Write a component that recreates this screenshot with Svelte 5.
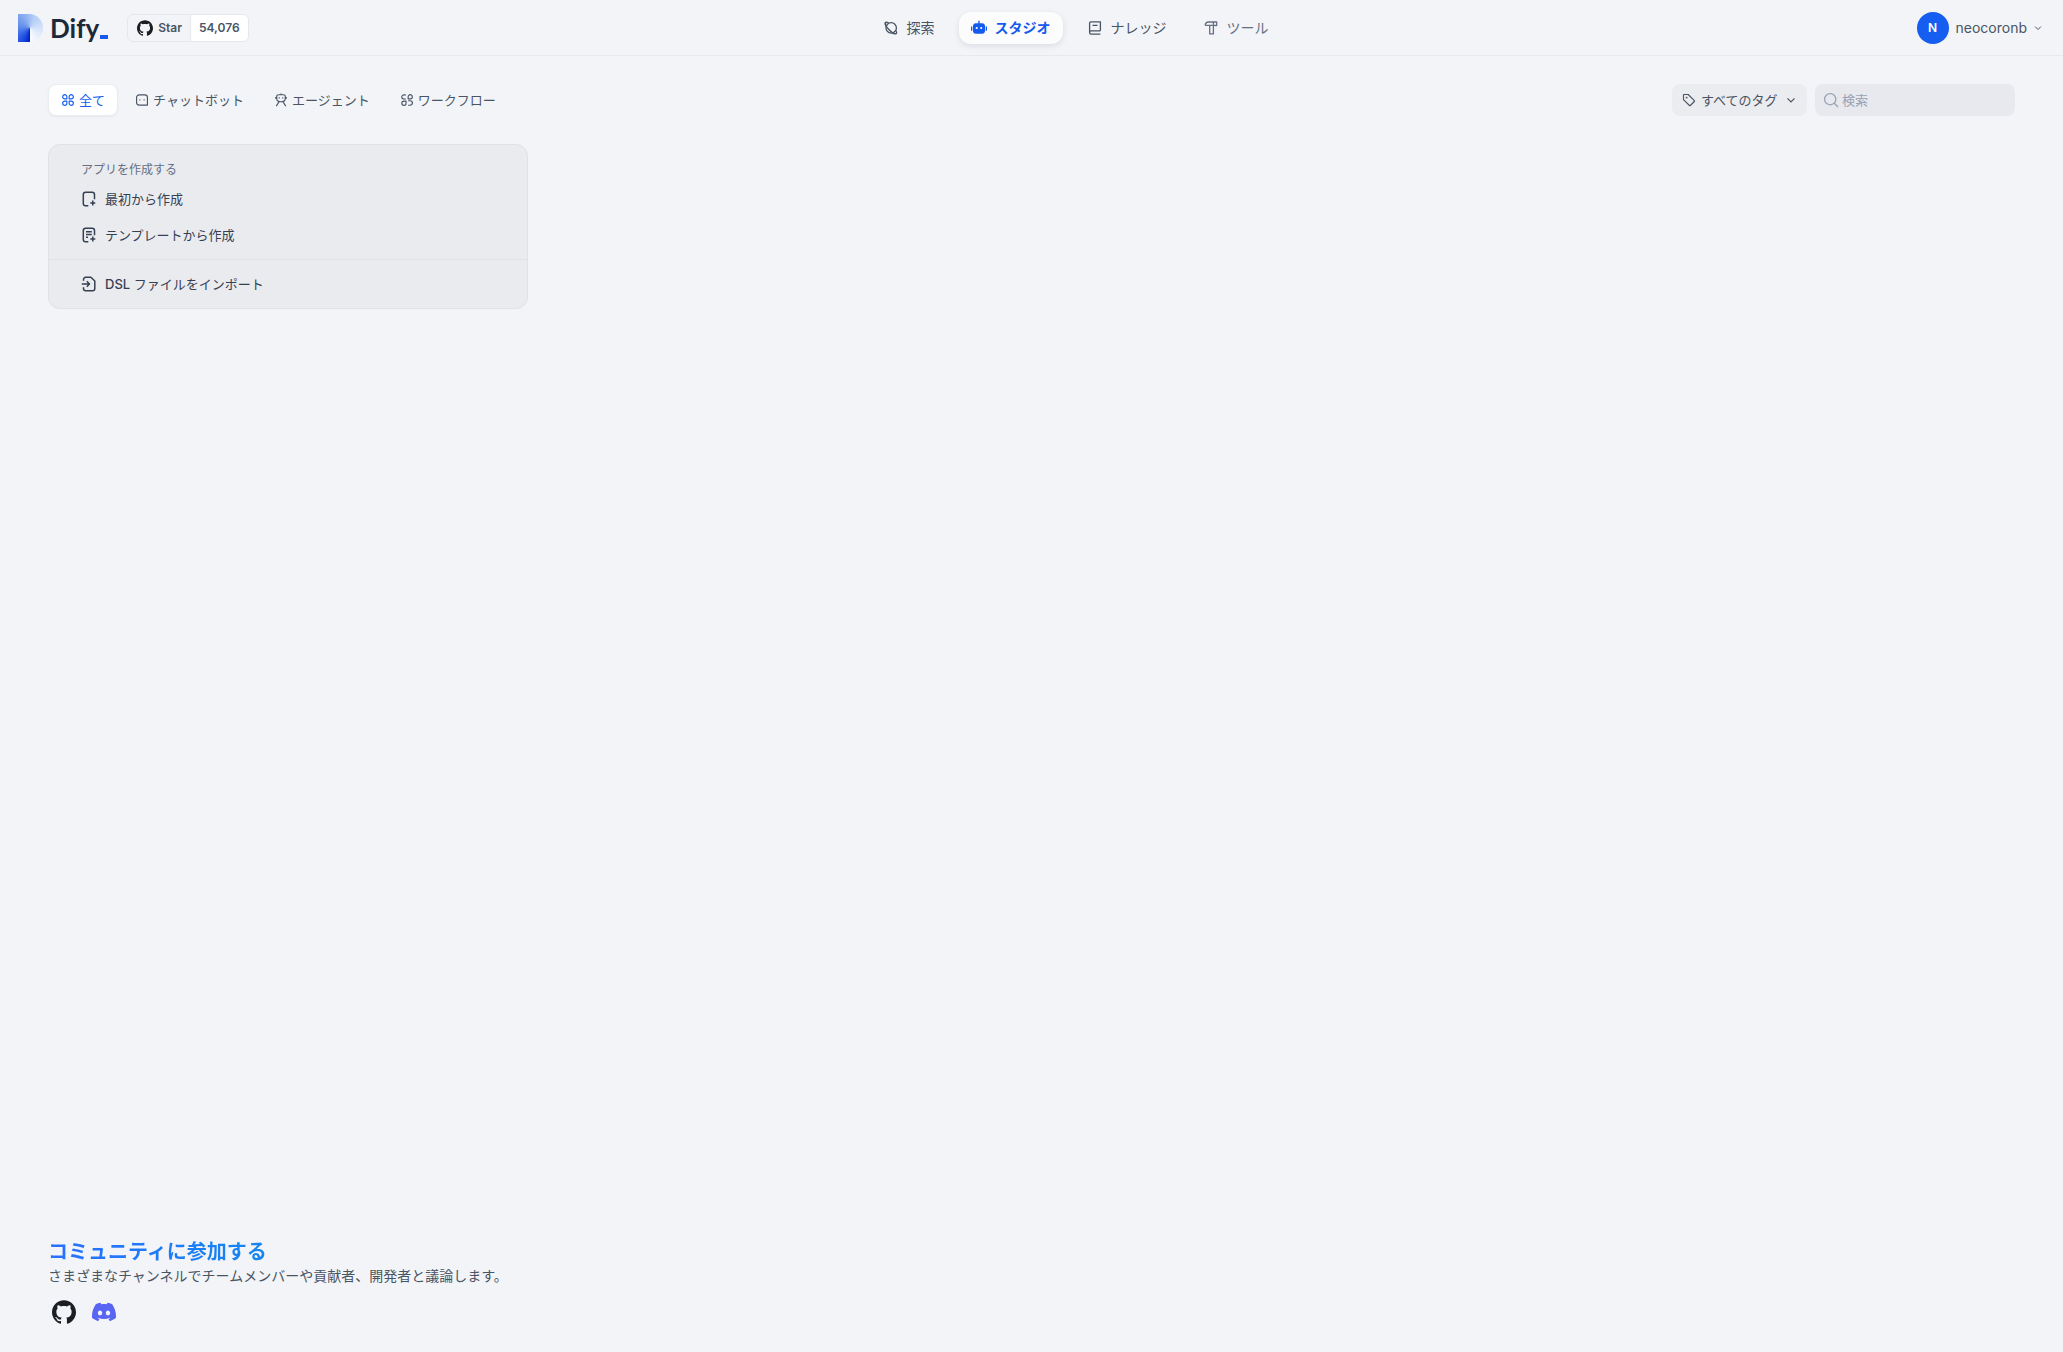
<script lang="ts">
	type Item = { id: string; label: string };

	const navItems: Item[] = [
		{ id: 'explore', label: '探索' },
		{ id: 'studio', label: 'スタジオ' },
		{ id: 'knowledge', label: 'ナレッジ' },
		{ id: 'tools', label: 'ツール' },
	];
	const tabs: Item[] = [
		{ id: 'all', label: '全て' },
		{ id: 'chat', label: 'チャットボット' },
		{ id: 'agent', label: 'エージェント' },
		{ id: 'workflow', label: 'ワークフロー' },
	];

	let activeNav = $state('studio');
	let activeTab = $state('all');
	let tag = $state('all');
	let keyword = $state('');
</script>

{#snippet github()}
	<svg viewBox="0 0 24 24" fill="currentColor" aria-hidden="true">
		<path d="M12 .297c-6.63 0-12 5.373-12 12 0 5.303 3.438 9.8 8.205 11.385.6.113.82-.258.82-.577 0-.285-.01-1.04-.015-2.04-3.338.724-4.042-1.61-4.042-1.61C4.422 18.07 3.633 17.7 3.633 17.7c-1.087-.744.084-.729.084-.729 1.205.084 1.838 1.236 1.838 1.236 1.07 1.835 2.809 1.305 3.495.998.108-.776.417-1.305.76-1.605-2.665-.3-5.466-1.332-5.466-5.93 0-1.31.465-2.38 1.235-3.22-.135-.303-.54-1.523.105-3.176 0 0 1.005-.322 3.3 1.23.96-.267 1.98-.399 3-.405 1.02.006 2.04.138 3 .405 2.28-1.552 3.285-1.23 3.285-1.23.645 1.653.24 2.873.12 3.176.765.84 1.23 1.91 1.23 3.22 0 4.61-2.805 5.625-5.475 5.92.42.36.81 1.096.81 2.22 0 1.606-.015 2.896-.015 3.286 0 .315.21.69.825.57C20.565 22.092 24 17.592 24 12.297c0-6.627-5.373-12-12-12" />
	</svg>
{/snippet}

{#snippet chevron()}
	<svg class="chevron" viewBox="0 0 12 12" fill="none" stroke="currentColor" aria-hidden="true">
		<path d="M2.5 4.3 6 7.8l3.5-3.5" stroke-width="1.2" />
	</svg>
{/snippet}

{#snippet icon(id: string)}
	<svg viewBox="0 0 16 16" fill="none" stroke="currentColor" stroke-width="1.3" stroke-linejoin="round" aria-hidden="true">
		{#if id === 'explore'}
			<circle cx="8.200" cy="7.900" r="5.200" />
			<path d="M5.600 2.900C4 2 2.800 1.900 2.400 2.400c-.9 1 .7 4.200 3.500 7.100s6 4.900 7.300 4.200c.7-.4.500-1.700-.5-3.500M2.600 2.300v4.200M9.500 13.600h4" />
		{:else if id === 'studio'}
			<path d="M7.300.8h1.400v2.400h2.600c1.500 0 2.700 1.200 2.700 2.700v5.100c0 1.500-1.200 2.700-2.700 2.700H4.700C3.200 13.700 2 12.500 2 11V5.900c0-1.500 1.200-2.700 2.700-2.700h2.600zM0 6.500h1.300v4.200H0zM14.700 6.500H16v4.200h-1.300z" fill="currentColor" stroke="none" />
			<circle class="eye" cx="5.8" cy="8" r="1.1" />
			<circle class="eye" cx="10.2" cy="8" r="1.1" />
		{:else if id === 'knowledge'}
			<path d="M13.400 10.800V1.900H4c-.8 0-1.400.6-1.400 1.400v9.200c0 .9.600 1.600 1.500 1.600h9.300M2.600 12.400c0-.9.600-1.600 1.500-1.600h9.300M5.500 5.300h5" />
		{:else if id === 'tools'}
			<path d="M2.100 5.400c.3-2.100 1.400-3.400 3.400-3.400h8.200v3.500h-1.800L10.400 5v8.900H6.700V5.400H2.100M10.400 2v3.400M6.700 5.400h3.700" />
		{:else if id === 'all'}
			<path d="M6.700 6.700H4.300A2.400 2.400 0 1 1 6.700 4.300zM9.300 6.700h2.400A2.400 2.400 0 1 0 9.300 4.300zM6.700 9.300H4.300a2.400 2.400 0 1 0 2.400 2.400zM9.300 9.300h2.400a2.400 2.400 0 1 1-2.400 2.400z" />
		{:else if id === 'chat'}
			<path d="M4.800 2.200h6.400c1.700 0 3 1.200 3 2.900v8.700H4.800c-1.700 0-3-1.200-3-2.900V5.100c0-1.700 1.300-2.900 3-2.900z" />
			<path d="M5.600 7v1.700M10.400 7v1.700" stroke-width="1" />
		{:else if id === 'agent'}
			<path d="M5.400 2h5.200c1.300 0 2.300.9 2.300 2.200v2.300c0 2.200-1.600 3.500-4.900 3.500S3.100 8.700 3.100 6.500V4.200C3.100 2.900 4.100 2 5.400 2zM8 .5V2M2 4.500v2M14 4.500v2M5.900 9.700 2.600 15M10.100 9.700l3.300 5.300M6 4.800v1.600M10 4.800v1.600" />
		{:else if id === 'workflow'}
			<path d="M6.900 9.300H4.500a2.400 2.400 0 1 0 2.400 2.400zM9.300 6.700h2.400A2.400 2.400 0 1 0 9.300 4.300z" />
			<path d="M6.700 2.100H4.900C3.200 2.100 2 3 2 4.600s1.200 2.300 2.600 2.300h2.100M9.300 14h1.900c1.800 0 3-1.100 3-2.800s-1.300-2.400-2.600-2.400H9.300" />
		{:else if id === 'tag'}
			<path d="M1.700 6.500V2.400c0-.4.3-.7.7-.7h4.700l7 7c.3.300.3.700 0 1l-4.600 4.600c-.3.300-.7.300-1 0L1.700 7.500z" />
			<path d="M5.300 4.300v2M4.300 5.300h2" stroke-width="1" />
		{:else if id === 'search'}
			<circle cx="7.200" cy="7.200" r="5.600" />
			<path d="m11.300 11.300 3.700 3.700" />
		{:else if id === 'blank'}
			<path d="M7.300 14.700H4.600c-1.300 0-2.300-.9-2.300-2.300V3.600c0-1.400 1-2.300 2.300-2.300h6.600c1.300 0 2.300.9 2.300 2.300v4.700M11.800 9.600v5M9.300 12.100h5" stroke-width="1.500" />
		{:else if id === 'template'}
			<path d="M7.300 14.700H4.600c-1.300 0-2.300-.9-2.300-2.300V3.600c0-1.400 1-2.300 2.300-2.300h6.600c1.300 0 2.300.9 2.300 2.300v4.700M11.800 9.600v5M9.300 12.100h5M5 4.800h5.800M5 7.600h5.800M5 10.300h2" stroke-width="1.500" />
		{:else if id === 'import'}
			<path d="M2.500 4.700V3.600c0-1.300.9-2.300 2.200-2.300h5.200L13.800 5v7.400c0 1.400-.9 2.300-2.300 2.300H4.700c-1.300 0-2.200-.9-2.200-2.300v-1.100M.8 8h7.400M5.800 5.300 8.500 8l-2.700 2.700" stroke-width="1.500" />
		{/if}
	</svg>
{/snippet}

<div class="page">
	<header>
		<div class="brand">
			<a class="logo" href="#home" aria-label="Dify">
				<span class="mark"></span>
				<span class="name">Dify</span>
				<span class="cursor"></span>
			</a>
			<a class="star" href="#github">
				<span class="star-label">{@render github()}Star</span>
				<span class="star-count">54,076</span>
			</a>
		</div>
		<nav>
			{#each navItems as item (item.id)}
				<a
					href="#{item.id}"
					class={item.id}
					class:active={activeNav === item.id}
					onclick={() => (activeNav = item.id)}
				>
					{@render icon(item.id)}<span class="label">{item.label}</span>
				</a>
			{/each}
		</nav>
		<button class="account" type="button">
			<span class="avatar">N</span>
			<span>neocoronb</span>
			{@render chevron()}
		</button>
	</header>

	<main>
		<div class="toolbar">
			<div class="tabs">
				{#each tabs as tab (tab.id)}
					<button type="button" class:active={activeTab === tab.id} onclick={() => (activeTab = tab.id)}>
						{@render icon(tab.id)}<span class="label">{tab.label}</span>
					</button>
				{/each}
			</div>
			<div class="filters">
				<label class="tag">
					{@render icon('tag')}
					<select bind:value={tag} aria-label="タグ">
						<option value="all">すべてのタグ</option>
					</select>
					{@render chevron()}
				</label>
				<label class="search">
					{@render icon('search')}
					<input type="text" placeholder="検索" aria-label="検索" bind:value={keyword} />
				</label>
			</div>
		</div>

		<div class="grid">
			<section class="card">
				<div class="group">
					<h2>アプリを作成する</h2>
					<button type="button">{@render icon('blank')}<span class="label">最初から作成</span></button>
					<button type="button">{@render icon('template')}<span class="label">テンプレートから作成</span></button>
				</div>
				<div class="group import">
					<button type="button">
						{@render icon('import')}<span class="label"><b>DSL</b> ファイルをインポート</span>
					</button>
				</div>
			</section>
		</div>
	</main>

	<footer>
		<h3>コミュニティに参加する</h3>
		<p>さまざまなチャンネルでチームメンバーや貢献者、開発者と議論します。</p>
		<div class="social">
			<a href="#github" aria-label="GitHub">{@render github()}</a>
			<a class="discord" href="#discord" aria-label="Discord">
				<svg viewBox="0 0 24 24" fill="currentColor" aria-hidden="true">
					<path d="M20.317 4.3698a19.7913 19.7913 0 00-4.8851-1.5152.0741.0741 0 00-.0785.0371c-.211.3753-.4447.8648-.6083 1.2495-1.8447-.2762-3.68-.2762-5.4868 0-.1636-.3933-.4058-.8742-.6177-1.2495a.077.077 0 00-.0785-.037 19.7363 19.7363 0 00-4.8852 1.515.0699.0699 0 00-.0321.0277C.5334 9.0458-.319 13.5799.0992 18.0578a.0824.0824 0 00.0312.0561c2.0528 1.5076 4.0413 2.4228 5.9929 3.0294a.0777.0777 0 00.0842-.0276c.4616-.6304.8731-1.2952 1.226-1.9942a.076.076 0 00-.0416-.1057c-.6528-.2476-1.2743-.5495-1.8722-.8923a.077.077 0 01-.0076-.1277c.1258-.0943.2517-.1923.3718-.2914a.0743.0743 0 01.0776-.0105c3.9278 1.7933 8.18 1.7933 12.0614 0a.0739.0739 0 01.0785.0095c.1202.099.246.1981.3728.2924a.077.077 0 01-.0066.1276 12.2986 12.2986 0 01-1.873.8914.0766.0766 0 00-.0407.1067c.3604.698.7719 1.3628 1.225 1.9932a.076.076 0 00.0842.0286c1.961-.6067 3.9495-1.5219 6.0023-3.0294a.077.077 0 00.0313-.0552c.5004-5.177-.8382-9.6739-3.5485-13.6604a.061.061 0 00-.0312-.0286zM8.02 15.3312c-1.1825 0-2.1569-1.0857-2.1569-2.419 0-1.3332.9555-2.4189 2.157-2.4189 1.2108 0 2.1757 1.0952 2.1568 2.419 0 1.3332-.9555 2.4189-2.1569 2.4189zm7.9748 0c-1.1825 0-2.1569-1.0857-2.1569-2.419 0-1.3332.9554-2.4189 2.1569-2.4189 1.2108 0 2.1757 1.0952 2.1568 2.419 0 1.3332-.946 2.4189-2.1568 2.4189Z" />
				</svg>
			</a>
		</div>
	</footer>
</div>

<style>
	:global(body) {
		background: #f2f4f8;
	}
	.page {
		display: flex;
		flex-direction: column;
		min-height: 100vh;
		font-family: Inter, 'Noto Sans CJK JP', sans-serif;
		font-size: 13px;
		color: #495464;
		background: #f2f4f8;
	}
	.page * {
		box-sizing: border-box;
	}
	a {
		color: inherit;
		text-decoration: none;
	}
	button,
	select,
	input {
		font: inherit;
		color: inherit;
		background: none;
		border: none;
		outline: none;
		padding: 0;
	}
	button,
	select {
		cursor: pointer;
	}
	svg {
		width: 16px;
		height: 16px;
		flex-shrink: 0;
	}
	.chevron {
		width: 12px;
		height: 12px;
	}
	/* the CJK face sits low in its line box */
	.label {
		padding-bottom: 2px;
	}

	header {
		display: flex;
		align-items: center;
		justify-content: space-between;
		height: 56px;
		padding: 0 20px 0 18px;
		border-bottom: 1px solid #e7e9ee;
	}
	.brand {
		display: flex;
		align-items: center;
		gap: 19px;
	}
	.logo {
		display: flex;
		align-items: center;
		height: 28px;
	}
	.mark {
		width: 25px;
		height: 28px;
		margin-right: 7px;
		border-radius: 0 14px 14px 0;
		background: conic-gradient(from 180deg at 12px 14px, #0219c4, #1d4be0 30deg, #5a87ea 90deg, #86abf1 150deg, #b3cdf7 200deg, #d3e2fa 270deg, #f6f9fe 350deg, #f6f9fe);
	}
	.name {
		font-family: Lato, sans-serif;
		font-size: 26px;
		font-weight: 700;
		line-height: 28px;
		color: #1d2939;
	}
	.cursor {
		width: 8px;
		height: 4px;
		margin: 18px 0 0 1px;
		background: #155aef;
	}
	.star {
		display: flex;
		height: 28px;
		overflow: hidden;
		border: 1px solid #e6e8ed;
		border-radius: 6px;
		font-size: 12px;
		font-weight: 600;
	}
	.star-label,
	.star-count {
		display: flex;
		align-items: center;
		padding: 0 8px;
	}
	.star-label {
		gap: 5px;
		padding-left: 9px;
	}
	.star-label svg {
		color: #1b1f24;
	}
	.star-count {
		background: #fff;
		border-left: 1px solid #e6e8ed;
	}

	nav {
		display: flex;
		gap: 12px;
		font-size: 14px;
	}
	nav a {
		display: flex;
		align-items: center;
		gap: 8px;
		height: 32px;
		padding: 0 12px;
		border-radius: 12px;
	}
	nav .tools {
		color: #676f83;
	}
	nav .active {
		font-weight: 700;
		color: #155aef;
		background: #fcfcfd;
		box-shadow: 0 2px 6px #1018281a;
	}
	.eye {
		fill: #fcfcfd;
		stroke: none;
	}
	.account {
		display: flex;
		align-items: center;
		gap: 7px;
		padding-left: 14px;
		font-size: 14px;
	}
	.account .chevron {
		width: 10px;
		height: 10px;
		margin-left: -1px;
	}
	.avatar {
		display: grid;
		place-items: center;
		width: 32px;
		height: 32px;
		border-radius: 50%;
		font-size: 12px;
		font-weight: 600;
		color: #fff;
		background: #155eef;
	}

	main {
		flex: 1;
		padding: 28px 48px;
	}
	.toolbar {
		display: flex;
		align-items: center;
		justify-content: space-between;
		height: 32px;
	}
	.tabs,
	.filters {
		display: flex;
		gap: 4px;
	}
	.tabs button {
		display: flex;
		align-items: center;
		gap: 4px;
		height: 32px;
		padding: 0 12px;
		border: 1px solid transparent;
		border-radius: 8px;
	}
	.tabs button svg {
		width: 14px;
		height: 14px;
	}
	.tabs .active {
		color: #155eef;
		background: #fff;
		border-color: #eaecf0;
		box-shadow: 0 1px 2px #1018280d;
	}
	.filters {
		gap: 8px;
	}
	.tag,
	.search {
		display: flex;
		align-items: center;
		height: 32px;
		border-radius: 8px;
	}
	.tag {
		gap: 5px;
		padding: 0 10px;
		background: #ebecef;
	}
	.tag svg:first-child {
		width: 14px;
		height: 14px;
	}
	.tag select {
		appearance: none;
	}
	.search {
		gap: 3px;
		width: 200px;
		padding: 0 8px;
		color: #98a2b3;
		background: #e8e9ee;
	}
	.search input {
		flex: 1;
		min-width: 0;
	}
	.search input::placeholder {
		color: #98a2b3;
	}

	.grid {
		display: grid;
		grid-template-columns: repeat(4, 1fr);
		gap: 16px;
		padding-top: 28px;
	}
	.card {
		border: 1px solid #dfe1e5;
		border-radius: 12px;
		background: #eaebef;
	}
	.group {
		display: flex;
		flex-direction: column;
		gap: 4px;
		padding: 16px 8px 8px;
	}
	.group.import {
		padding: 8px;
		border-top: 1px solid #dfe1e5;
	}
	.card h2 {
		margin: 0;
		padding: 0 24px;
		font-size: 12px;
		font-weight: 400;
		line-height: 18px;
		color: #676f83;
	}
	.card button {
		display: flex;
		align-items: center;
		gap: 8px;
		height: 32px;
		padding: 0 24px;
		color: #354052;
	}
	.card b {
		font-weight: 500;
	}

	footer {
		padding: 0 48px 24px;
	}
	h3 {
		width: fit-content;
		margin: 0;
		font-size: 20px;
		font-weight: 700;
		line-height: 28px;
		color: transparent;
		background: linear-gradient(90deg, #2970ff, #1585f0);
		background-clip: text;
	}
	p {
		margin: 0;
		font-size: 14px;
		line-height: 20px;
	}
	.social {
		display: flex;
		gap: 8px;
		margin-top: 10px;
	}
	.social a {
		display: flex;
		padding: 4px;
		color: #1b1f24;
	}
	.social svg {
		width: 24px;
		height: 24px;
	}
	.social .discord {
		color: #5865f2;
	}
</style>
